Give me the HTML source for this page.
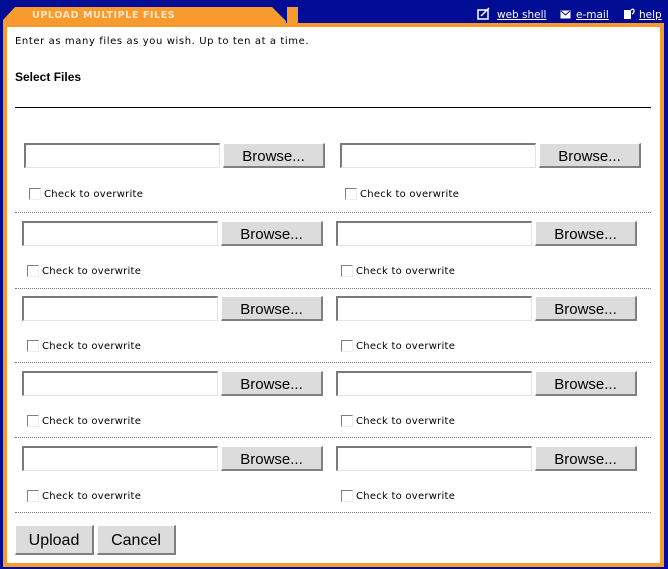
<!DOCTYPE html>
<html><head><meta charset="utf-8"><style>
*{margin:0;padding:0;box-sizing:border-box}
body{width:668px;height:569px;background:#000c94;position:relative;overflow:hidden;font-family:"DejaVu Sans",Verdana,sans-serif}
.a{position:absolute}
.in{position:absolute;height:25px;width:196px;background:#fff;border-top:2px solid #7a7a7a;border-left:2px solid #7a7a7a;border-bottom:1px solid #e4e4e4;border-right:1px solid #e4e4e4}
.bt{position:absolute;height:25px;width:102px;background:#dcdcdc;border-top:1px solid #fff;border-left:1px solid #fff;border-bottom:2px solid #808080;border-right:2px solid #808080;font-family:"Liberation Sans",Arial,sans-serif;font-size:15px;color:#000;text-align:center;line-height:25px}
.cb{position:absolute;width:12px;height:12px;border-top:1px solid #808080;border-left:1px solid #808080;border-bottom:1px solid #eee;border-right:1px solid #eee;background:#fff}
.ct{position:absolute;font-size:10px;color:#000;white-space:nowrap;letter-spacing:0.25px}
.dot{position:absolute;left:15px;width:636px;border-top:1px dotted #777}
.lk{position:absolute;top:9px;color:#fff;font-size:10.5px;text-decoration:underline;white-space:nowrap}
</style></head><body>
<div class="a" style="left:3px;top:7px;width:283px;height:20px;background:#f89a2e;clip-path:polygon(0 13px,12px 0,269px 0,283px 14px,283px 20px,0 20px)"></div>
<div class="a" style="left:287px;top:7px;width:11px;height:20px;background:#f89a2e"></div>
<div class="a" style="left:3px;top:23px;width:661px;height:544px;background:#f89a2e"></div>
<div class="a" style="left:7px;top:27px;width:653px;height:536px;background:#fff"></div>
<div class="a" style="left:32px;top:10px;color:#fde7c8;font-size:9.5px;font-weight:bold;letter-spacing:0.6px">UPLOAD MULTIPLE FILES</div>
<svg class="a" style="left:477px;top:7px" width="14" height="13"><rect x="1" y="3" width="10" height="9" fill="none" stroke="#fff" stroke-width="1.5"/><path d="M4 9 L12 1" stroke="#fff" stroke-width="1.5"/></svg>
<span class="lk" style="left:497px">web shell</span>
<svg class="a" style="left:560px;top:10px" width="11" height="9"><rect x="0.5" y="0.5" width="10" height="8" fill="#fff"/><path d="M1 1 L5.5 5 L10 1" stroke="#000c94" fill="none"/></svg>
<span class="lk" style="left:576px">e-mail</span>
<svg class="a" style="left:623px;top:7px" width="12" height="13"><rect x="1" y="3" width="7" height="9" fill="#fff"/><path d="M8 3 Q11 1 11 4 Q11 6 9 7" stroke="#fff" fill="none" stroke-width="1.3"/></svg>
<span class="lk" style="left:639px">help</span>
<div class="a" style="left:15px;top:36px;font-size:10px;letter-spacing:0.6px;white-space:nowrap">Enter as many files as you wish. Up to ten at a time.</div>
<div class="a" style="left:15px;top:70px;font-family:'Liberation Sans',Arial,sans-serif;font-size:12px;font-weight:bold">Select Files</div>
<div class="a" style="left:15px;top:107px;width:636px;border-top:1px solid #000"></div>
<div id="rows"></div>
<div class="bt" style="left:15px;top:525px;width:79px;height:30px;line-height:29px;font-size:16px">Upload</div>
<div class="bt" style="left:97px;top:525px;width:79px;height:30px;line-height:29px;font-size:16px">Cancel</div>
<script>
var R=[[143,24,340,188,29,345,212],[221,22,336,265,27,341,288],[296,22,336,340,27,341,362],[371,22,336,415,27,341,437],[446,22,336,490,27,341,512]];
var h='';
R.forEach(function(r){
[[r[1],r[4]],[r[2],r[5]]].forEach(function(c){
h+='<div class="in" style="left:'+c[0]+'px;top:'+r[0]+'px"></div>';
h+='<div class="bt" style="left:'+(c[0]+199)+'px;top:'+r[0]+'px">Browse...</div>';
h+='<div class="cb" style="left:'+c[1]+'px;top:'+r[3]+'px"></div>';
h+='<div class="ct" style="left:'+(c[1]+15)+'px;top:'+(r[3]+1)+'px">Check to overwrite</div>';
});
h+='<div class="dot" style="top:'+r[6]+'px"></div>';
});
document.getElementById('rows').innerHTML=h;
</script>
</body></html>
